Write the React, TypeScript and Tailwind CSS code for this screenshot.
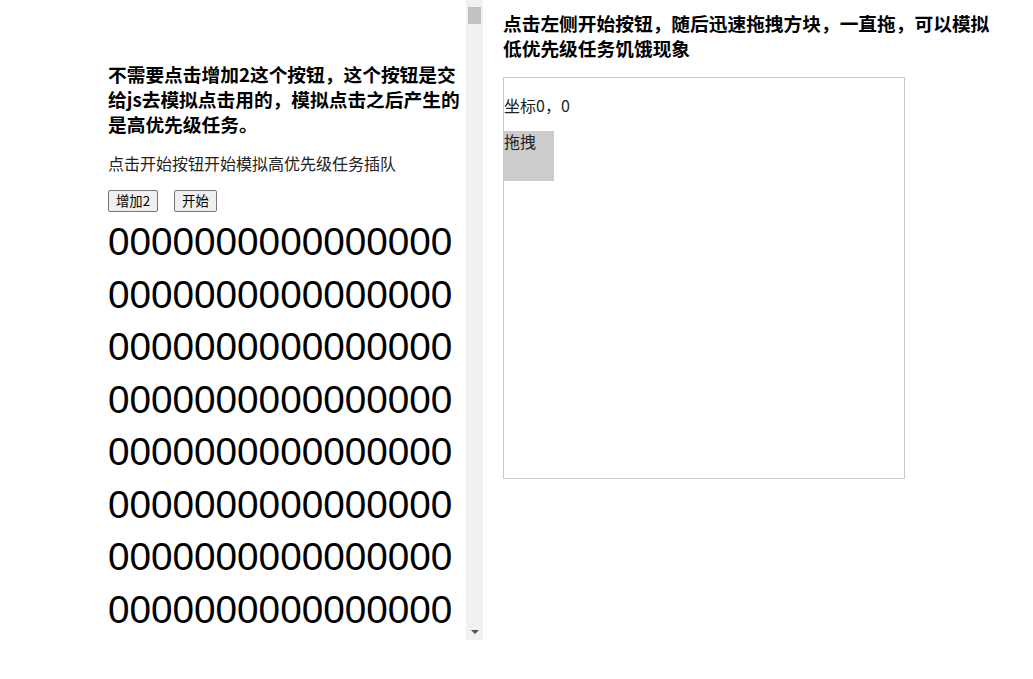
export default function App() {
  const rows = Array.from({ length: 8 });

  return (
    <div className="flex w-[1033px] h-[679px] overflow-hidden bg-white text-black font-['Noto_Sans_CJK_SC',sans-serif]">
      {/* left: scrolling list */}
      <div className="flex h-[640px] w-[483px] shrink-0">
        <div className="w-[466px] overflow-hidden pl-[108px] pt-[61px]">
          <h3 className="w-[352px] text-[18.72px] leading-[25px] font-bold">
            不需要点击增加2这个按钮，这个按钮是交给js去模拟点击用的，模拟点击之后产生的是高优先级任务。
          </h3>
          <p className="mt-[17px] text-[16px] leading-[21px] text-[#222]">点击开始按钮开始模拟高优先级任务插队</p>
          <div className="mt-[16px] flex gap-[16px]">
            <button className="h-[22px] px-[7px] text-[13.33px] leading-[20px] bg-[#efefef] border border-[#767676] rounded-[2px]">
              增加2
            </button>
            <button className="h-[22px] px-[7px] text-[13.33px] leading-[20px] bg-[#efefef] border border-[#767676] rounded-[2px]">
              开始
            </button>
          </div>
          <div className="mt-[4px] font-['Liberation_Sans',sans-serif] text-[38.7px] leading-[52.5px]">
            {rows.map((_, i) => (
              <div key={i}>0000000000000000</div>
            ))}
          </div>
        </div>
        {/* scrollbar */}
        <div className="flex w-[17px] flex-col bg-[#f1f1f1]">
          <div className="mx-[2px] mt-[7px] h-[17px] bg-[#c1c1c1]"></div>
          <div className="flex-1"></div>
          <div className="flex h-[17px] items-center justify-center">
            <div className="h-0 w-0 border-x-[4px] border-t-[4px] border-x-transparent border-t-[#505050]"></div>
          </div>
        </div>
      </div>

      {/* right: drag area */}
      <div className="ml-[20px] w-[492px] shrink-0 pt-[10px]">
        <h3 className="text-[18.72px] leading-[25px] font-bold">
          点击左侧开始按钮，随后迅速拖拽方块，一直拖，可以模拟低优先级任务饥饿现象
        </h3>
        <div className="mt-[17px] box-border h-[402px] w-[402px] border border-[#c8c8c8]">
          <p className="mt-[17px] text-[16px] leading-[21px] text-[#222]">坐标0，0</p>
          <div className="mt-[15px] h-[50px] w-[50px] bg-[#cccccc] text-[16px] leading-[21px] text-[#222]">拖拽</div>
        </div>
      </div>
    </div>
  );
}
